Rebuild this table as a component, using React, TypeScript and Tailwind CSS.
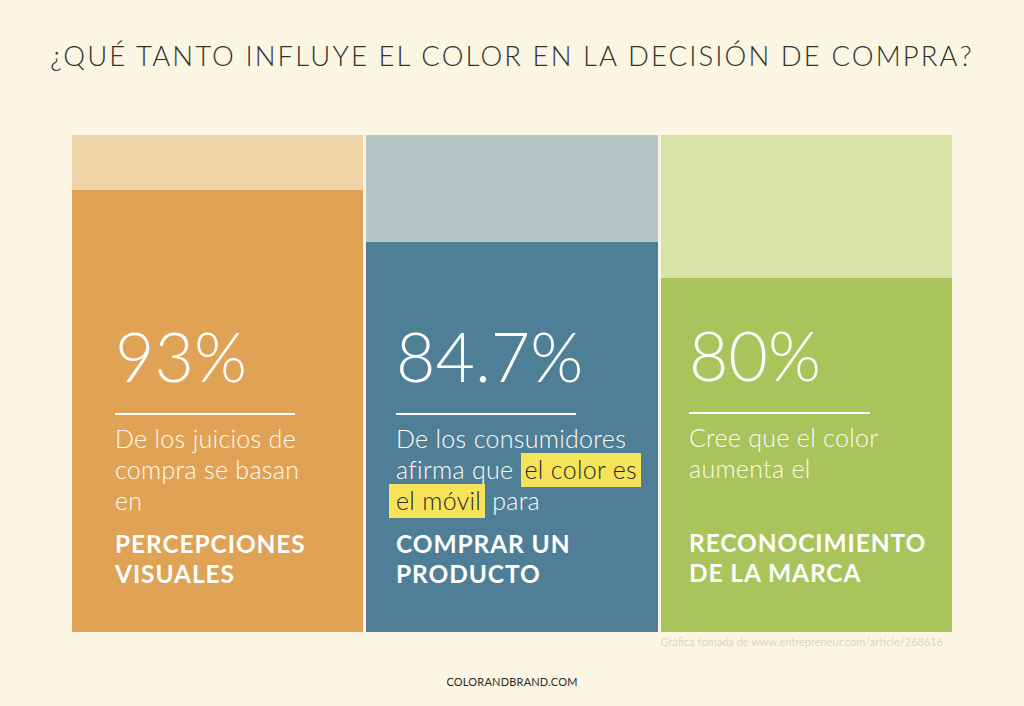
import React from "react";

const font = { fontFamily: "Lato, 'Open Sans', sans-serif" };

export default function App() {
  return (
    <div
      className="w-[1024px] h-[706px] bg-[#fbf5e4] flex flex-col items-center overflow-hidden"
      style={font}
    >
      <h1 className="mt-[39px] h-[33px] text-[27.5px] leading-[33px] font-light text-[#35322c] tracking-[2.1px] whitespace-nowrap">
        ¿QUÉ TANTO INFLUYE EL COLOR EN LA DECISIÓN DE COMPRA?
      </h1>

      <div className="mt-[63px] w-[880px] flex gap-[3px] h-[497px]">
        {/* Column 1 */}
        <div className="w-[291px] flex flex-col">
          <div className="h-[55px] bg-[#f0d4a8]" />
          <div className="flex-1 bg-[#e0a254] pl-[43px] pt-[132px] text-white">
            <div className="text-[68px] leading-[68px] font-light">93%</div>
            <div className="mt-[23px] w-[180px] h-[2px] bg-white" />
            <p className="mt-[8px] h-[94px] text-[25px] leading-[31px] font-light tracking-[0.3px] text-[#fffaf0]">
              De los juicios de
              <br />
              compra se basan
              <br />
              en
            </p>
            <p className="mt-[12px] text-[24.5px] leading-[30px] font-bold tracking-[0.9px]">
              PERCEPCIONES
              <br />
              VISUALES
            </p>
          </div>
        </div>

        {/* Column 2 */}
        <div className="w-[292px] flex flex-col">
          <div className="h-[107px] bg-[#b6c6c5]" />
          <div className="flex-1 bg-[#4f7f97] pl-[30px] pt-[80px] text-white">
            <div className="text-[68px] leading-[68px] font-light">84.7%</div>
            <div className="mt-[23px] w-[180px] h-[2px] bg-white" />
            <p className="mt-[8px] h-[94px] text-[25px] leading-[31px] font-light tracking-[0.3px] text-[#fffaf0] whitespace-nowrap">
              De los consumidores
              <br />
              afirma que{" "}
              <span className="bg-[#f7e35a] text-[#2b2a22] pl-[4px] pr-[4px] pt-[1px] pb-[3px]">
                el color es
              </span>
              <br />
              <span className="bg-[#f7e35a] text-[#2b2a22] ml-[-7px] pl-[7px] pr-[4px] pt-[1px] pb-[3px]">
                el móvil
              </span>{" "}
              para
            </p>
            <p className="mt-[12px] text-[24.5px] leading-[30px] font-bold tracking-[0.9px]">
              COMPRAR UN
              <br />
              PRODUCTO
            </p>
          </div>
        </div>

        {/* Column 3 */}
        <div className="w-[291px] flex flex-col">
          <div className="h-[143px] bg-[#d8e3a7]" />
          <div className="flex-1 bg-[#a8c45a] pl-[28px] pt-[43px] text-white">
            <div className="text-[68px] leading-[68px] font-light">80%</div>
            <div className="mt-[23px] w-[181px] h-[2px] bg-white" />
            <p className="mt-[8px] h-[94px] text-[25px] leading-[31px] font-light tracking-[0.3px] text-[#fffaf0]">
              Cree que el color
              <br />
              aumenta el
            </p>
            <p className="mt-[12px] text-[24.5px] leading-[30px] font-bold tracking-[0.9px]">
              RECONOCIMIENTO
              <br />
              DE LA MARCA
            </p>
          </div>
        </div>
      </div>

      <div className="w-[880px] flex justify-end">
        <p className="mt-[2px] mr-[9px] text-[11px] leading-[16px] text-[#ddd6c5] whitespace-nowrap">
          Gráfica tomada de www.entrepreneur.com/article/268616
        </p>
      </div>

      <p className="mt-[25px] text-[11px] leading-[14px] text-[#2f2c27] tracking-[0.2px]">
        COLORANDBRAND.COM
      </p>
    </div>
  );
}
